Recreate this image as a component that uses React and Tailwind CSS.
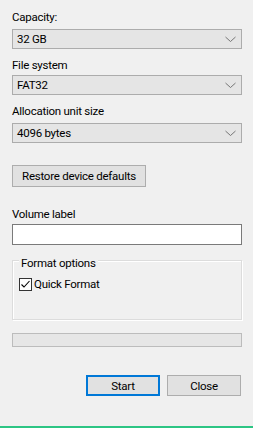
import React from "react";

function Combo({ value }) {
  return (
    <div className="flex h-[20px] items-center justify-between border border-[#acacac] bg-[#e5e5e5] pl-[4px] pr-[5px]">
      <span className="leading-4 text-black">{value}</span>
      <svg width="11" height="7" viewBox="0 0 11 7" className="mt-[1px]">
        <polyline points="0.5,1 5.5,5.5 10.5,1" fill="none" stroke="#6a6a6a" strokeWidth="0.9" />
      </svg>
    </div>
  );
}

export default function App() {
  return (
    <div
      className="flex h-[428px] w-[253px] flex-col bg-[#f0f0f0] text-[11.5px] leading-4 tracking-[-0.25px] text-black"
      style={{ fontFamily: 'Roboto, "Noto Sans", sans-serif' }}
    >
      <div className="flex flex-col pl-[12px] pr-[11px] pt-[9px]">
        <div className="h-[16px]">Capacity:</div>
        <div className="mt-[4px]">
          <Combo value="32 GB" />
        </div>
        <div className="mt-[8px] h-[16px]">File system</div>
        <div className="mt-[2px]">
          <Combo value="FAT32" />
        </div>
        <div className="mt-[8px] h-[16px]">Allocation unit size</div>
        <div className="mt-[4px]">
          <Combo value="4096 bytes" />
        </div>
        <div className="mt-[22px] flex h-[22px] w-[134px] items-center justify-center border border-[#adadad] bg-[#e1e1e1]">
          Restore device defaults
        </div>
        <div className="mt-[19px] h-[16px]">Volume label</div>
        <div className="mt-[2px] h-[21px] border border-[#7a7a7a] bg-white"></div>
        <div className="relative mt-[15px] h-[60px] border border-[#dcdcdc] shadow-[inset_1px_1px_0_#ffffff,1px_1px_0_#ffffff]">
          <div className="absolute left-[6px] top-[-6px] bg-[#f0f0f0] px-[2px] leading-4">Format options</div>
          <div className="mt-[15px] flex h-[16px] items-center pl-[6px]">
            <div className="flex h-[13px] w-[13px] items-center justify-center border border-[#333333] bg-white">
              <svg width="11" height="11" viewBox="0 0 11 11">
                <polyline points="1.5,5.5 4,8 9.5,2" fill="none" stroke="#000" strokeWidth="1.1" />
              </svg>
            </div>
            <span className="ml-[2px]">Quick Format</span>
          </div>
        </div>
        <div className="mt-[13px] h-[14px] border border-[#bcbcbc] bg-[#e6e6e6]"></div>
        <div className="mr-[1px] mt-[28px] flex justify-end gap-[7px]">
          <div className="flex h-[21px] w-[74px] items-center justify-center border-2 border-[#0078d7] bg-[#e1e1e1]">
            Start
          </div>
          <div className="flex h-[21px] w-[74px] items-center justify-center border border-[#adadad] bg-[#e1e1e1]">
            Close
          </div>
        </div>
      </div>
      <div className="mt-auto h-[2px] bg-[#2dc584]"></div>
    </div>
  );
}
